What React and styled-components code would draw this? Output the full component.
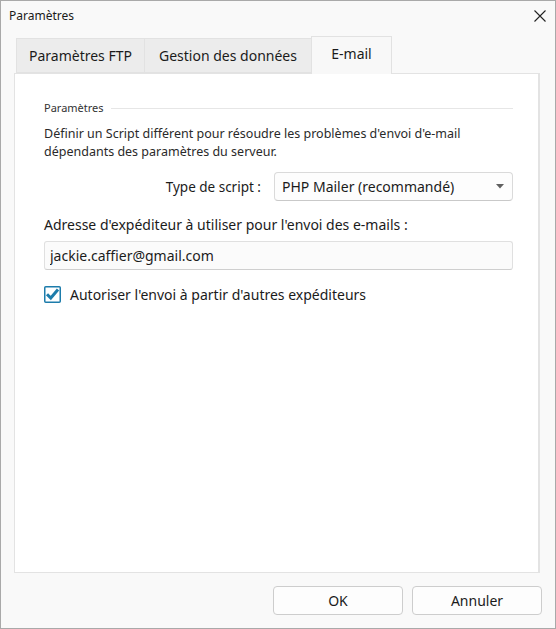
import React from "react";
import styled, { createGlobalStyle } from "styled-components";

const GlobalStyle = createGlobalStyle`
  html, body {
    margin: 0;
    padding: 0;
    background: #f9f9f9;
  }
  * {
    box-sizing: border-box;
  }
`;

const Window = styled.div`
  width: 556px;
  height: 629px;
  border: 1px solid #a9a9a9;
  background: #f9f9f9;
  display: flex;
  flex-direction: column;
  font-family: "Noto Sans", "Open Sans", sans-serif;
  color: #1b1b1b;
`;

const TitleBar = styled.div`
  height: 35px;
  display: flex;
  align-items: flex-start;
  justify-content: space-between;
  padding: 6px 9px 0 8px;
  font-size: 12px;
`;

const CloseButton = styled.button`
  border: 0;
  background: none;
  padding: 0;
  margin-top: 3px;
  width: 12px;
  height: 12px;
  display: flex;
  color: #222;
`;

const Body = styled.div`
  flex: 1;
  display: flex;
  flex-direction: column;
  padding: 0 15px 0 13px;
`;

const TabStrip = styled.div`
  display: flex;
  align-items: flex-end;
  padding-left: 2px;
  height: 37px;
  position: relative;
  z-index: 1;
`;

const Tab = styled.div`
  width: ${(p) => p.$width}px;
  height: ${(p) => (p.$active ? "38px" : "35px")};
  padding-top: 7px;
  font-size: 14px;
  border: 1px solid #e2e2e2;
  border-bottom: ${(p) => (p.$active ? "0" : "1px solid #e2e2e2")};
  border-left: ${(p) => (p.$first || p.$active ? "1px solid #e2e2e2" : "0")};
  background: ${(p) => (p.$active ? "#f8f8f8" : "#ececec")};
  margin-bottom: ${(p) => (p.$active ? "-1px" : "0")};
  margin-left: ${(p) => (p.$active ? "-1px" : "0")};
  display: flex;
  justify-content: center;
  white-space: nowrap;
`;

const Panel = styled.div`
  height: 500px;
  background: #ffffff;
  border: 1px solid #e3e3e3;
  border-right: 2px solid #e3e3e3;
  padding: 27px 25px 0 29px;
  display: flex;
  flex-direction: column;
`;

const GroupHeader = styled.div`
  display: flex;
  align-items: center;
  gap: 7px;
  font-size: 11px;
  color: #333;
  line-height: 14px;
`;

const Rule = styled.div`
  flex: 1;
  height: 1px;
  background: #e6e6e6;
`;

const Description = styled.p`
  margin: 10px 0 0;
  font-size: 12.5px;
  line-height: 18px;
  color: #2a2a2a;
`;

const FieldRow = styled.div`
  display: flex;
  justify-content: flex-end;
  align-items: center;
  gap: 13px;
  margin-top: 11px;
  font-size: 13.5px;
`;

const Select = styled.div`
  width: 239px;
  height: 29px;
  border: 1px solid #dadada;
  border-bottom-color: #c9c9c9;
  border-radius: 4px;
  background: #fdfdfd;
  display: flex;
  align-items: center;
  justify-content: space-between;
  padding: 0 8px 0 7px;
  font-size: 14px;
`;

const Label = styled.div`
  margin-top: 15px;
  font-size: 14px;
  line-height: 18px;
`;

const TextInput = styled.input`
  margin-top: 7px;
  width: 100%;
  height: 29px;
  border: 1px solid #e0e0e0;
  border-bottom-color: #cfcfcf;
  border-radius: 3px;
  background: #fbfbfb;
  padding: 0 5px;
  font-family: inherit;
  font-size: 14px;
  color: #1b1b1b;
  outline: none;
`;

const CheckRow = styled.label`
  margin-top: 15px;
  display: flex;
  align-items: center;
  gap: 9px;
  font-size: 14px;
`;

const Footer = styled.div`
  flex: 1;
  display: flex;
  justify-content: flex-end;
  align-items: flex-start;
  gap: 9px;
  padding: 13px 0 0;
  margin-right: -2px;
`;

const Button = styled.button`
  width: 130px;
  height: 29px;
  border: 1px solid #cdcdcd;
  border-radius: 4px;
  background: #fdfdfd;
  font-family: inherit;
  font-size: 14px;
  color: #1b1b1b;
`;

const CheckBox = () => (
  <svg width="17" height="17" viewBox="0 0 17 17">
    <rect x="0.75" y="0.75" width="15.5" height="15.5" rx="1" fill="#fff" stroke="#1d7cab" strokeWidth="1.5" />
    <path d="M3 8.2 L6.8 12 L14 3.6" fill="none" stroke="#1d7cab" strokeWidth="3" strokeLinejoin="miter" />
  </svg>
);

const Caret = () => (
  <svg width="8" height="5" viewBox="0 0 8 5">
    <path d="M0 0 H8 L4 4.5 Z" fill="#606060" />
  </svg>
);

const tabs = [
  { label: "Paramètres FTP", width: 129 },
  { label: "Gestion des données", width: 167 },
  { label: "E-mail", width: 81, active: true },
];

export default function App() {
  return (
    <>
      <GlobalStyle />
      <Window>
        <TitleBar>
          <span>Paramètres</span>
          <CloseButton aria-label="Fermer">
            <svg width="12" height="12" viewBox="0 0 12 12">
              <path d="M0.5 0.5 L11.5 11.5 M11.5 0.5 L0.5 11.5" stroke="#222" strokeWidth="1.1" />
            </svg>
          </CloseButton>
        </TitleBar>
        <Body>
          <TabStrip>
            {tabs.map((t, i) => (
              <Tab key={t.label} $active={t.active} $first={i === 0} $width={t.width}>
                {t.label}
              </Tab>
            ))}
          </TabStrip>
          <Panel>
            <GroupHeader>
              Paramètres
              <Rule />
            </GroupHeader>
            <Description>
              Définir un Script différent pour résoudre les problèmes d'envoi d'e-mail
              <br />
              dépendants des paramètres du serveur.
            </Description>
            <FieldRow>
              Type de script :
              <Select>
                PHP Mailer (recommandé)
                <Caret />
              </Select>
            </FieldRow>
            <Label>Adresse d'expéditeur à utiliser pour l'envoi des e-mails :</Label>
            <TextInput defaultValue="jackie.caffier@gmail.com" />
            <CheckRow>
              <CheckBox />
              Autoriser l'envoi à partir d'autres expéditeurs
            </CheckRow>
          </Panel>
          <Footer>
            <Button>OK</Button>
            <Button>Annuler</Button>
          </Footer>
        </Body>
      </Window>
    </>
  );
}
